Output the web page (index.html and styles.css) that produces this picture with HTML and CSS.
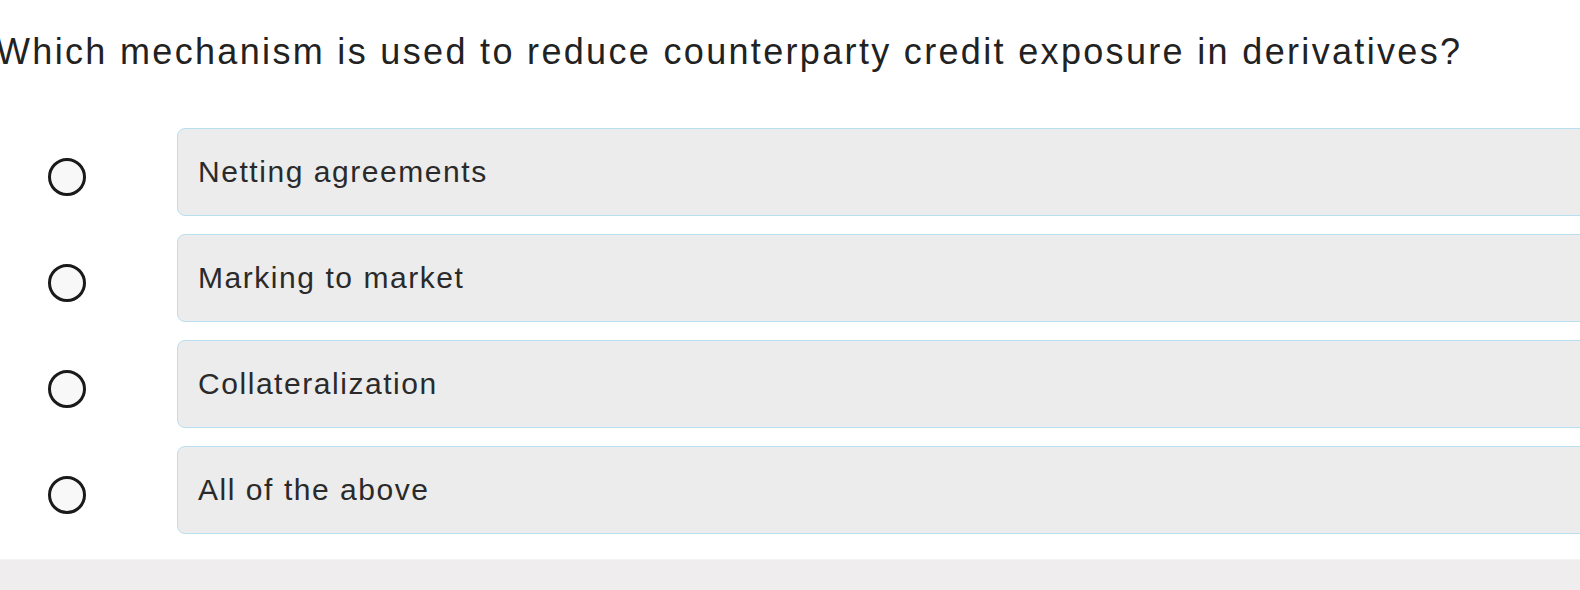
FILE: index.html
```html
<!DOCTYPE html>
<html>
<head>
<meta charset="utf-8">
<link rel="stylesheet" href="styles.css">
</head>
<body>
<div class="page">
  <main class="quiz">
    <h1 class="question">Which mechanism is used to reduce counterparty credit exposure in derivatives?</h1>
    <div class="options">
      <label class="option"><span class="radio"></span><span class="answer">Netting agreements</span></label>
      <label class="option"><span class="radio"></span><span class="answer">Marking to market</span></label>
      <label class="option"><span class="radio"></span><span class="answer">Collateralization</span></label>
      <label class="option"><span class="radio"></span><span class="answer">All of the above</span></label>
    </div>
  </main>
  <footer class="footer"></footer>
</div>
</body>
</html>
```

FILE: styles.css
```css
html, body {
  margin: 0;
  padding: 0;
  background: #ffffff;
}
body {
  width: 1580px;
  height: 590px;
  overflow: hidden;
  font-family: "Liberation Sans", Arial, Helvetica, sans-serif;
}
.page {
  display: flex;
  flex-direction: column;
  height: 590px;
}
.quiz {
  flex: 1;
  padding-top: 32px;
}
.question {
  margin: 0 0 0 -4px;
  font-size: 36px;
  line-height: 40px;
  letter-spacing: 2.33px;
  font-weight: normal;
  color: #222222;
  white-space: nowrap;
}
.options {
  margin-top: 56px;
  display: flex;
  flex-direction: column;
  gap: 18px;
}
.option {
  display: flex;
  align-items: center;
  height: 88px;
}
.radio {
  box-sizing: border-box;
  width: 38px;
  height: 38px;
  margin-left: 48px;
  margin-right: 91px;
  margin-top: 10px;
  border: 3.8px solid #1a1a1a;
  border-radius: 50%;
  background: #f8f8f8;
  flex: none;
}
.answer {
  box-sizing: border-box;
  flex: 1;
  height: 88px;
  margin-right: -40px;
  padding: 27px 0 0 20px;
  border: 1px solid #b9e0f0;
  border-radius: 8px;
  background: #ececec;
  font-size: 30px;
  line-height: 32px;
  letter-spacing: 1.55px;
  color: #2a2a2a;
}
.footer {
  height: 30px;
  background: #efeded;
  border-top: 1px solid #f4f3f3;
}
```
